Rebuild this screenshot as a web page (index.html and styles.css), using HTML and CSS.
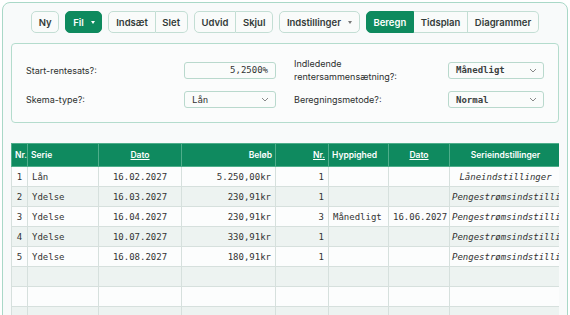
FILE: index.html
```html
<!doctype html>
<html lang="da">
	<head>
		<meta charset="UTF-8" />
		<title>Lånekalkulator</title>
		<link rel="stylesheet" href="styles.css">
	</head>
	<body>
		<div class="app">
			<div class="toolbar">
				<button class="btn">Ny</button>
				<button class="btn primary">Fil <span class="caret"></span></button>
				<div class="group">
					<button class="btn">Indsæt</button>
					<button class="btn">Slet</button>
				</div>
				<div class="group">
					<button class="btn">Udvid</button>
					<button class="btn">Skjul</button>
				</div>
				<button class="btn">Indstillinger <span class="caret"></span></button>
				<div class="group">
					<button class="btn primary">Beregn</button>
					<button class="btn">Tidsplan</button>
					<button class="btn">Diagrammer</button>
				</div>
			</div>

			<div class="settings">
				<div class="field">
					<label>Start-rentesats?:</label>
					<div class="input">5,2500%</div>
				</div>
				<div class="field">
					<label>Indledende<br>rentersammensætning?:</label>
					<div class="select wide"><span>Månedligt</span>
						<svg width="8" height="5" viewBox="0 0 8 5"><path d="M1 1l3 3 3-3" fill="none" stroke="#888" stroke-width="1"/></svg>
					</div>
				</div>
				<div class="field">
					<label>Skema-type?:</label>
					<div class="select"><span>Lån</span>
						<svg width="8" height="5" viewBox="0 0 8 5"><path d="M1 1l3 3 3-3" fill="none" stroke="#888" stroke-width="1"/></svg>
					</div>
				</div>
				<div class="field">
					<label>Beregningsmetode?:</label>
					<div class="select wide"><span>Normal</span>
						<svg width="8" height="5" viewBox="0 0 8 5"><path d="M1 1l3 3 3-3" fill="none" stroke="#888" stroke-width="1"/></svg>
					</div>
				</div>
			</div>

			<div class="table-wrap">
				<table class="grid">
					<colgroup>
						<col style="width:16px"><col style="width:71px"><col style="width:83px"><col style="width:94px">
						<col style="width:53px"><col style="width:60px"><col style="width:61px"><col style="width:112px">
					</colgroup>
					<thead>
						<tr>
							<th class="left">Nr.</th>
							<th class="left">Serie</th>
							<th class="center"><a>Dato</a></th>
							<th class="right">Beløb</th>
							<th class="right"><a>Nr.</a></th>
							<th class="left">Hyppighed</th>
							<th class="center"><a>Dato</a></th>
							<th class="center">Serieindstillinger</th>
						</tr>
					</thead>
					<tbody>
						<tr>
							<td class="center">1</td><td>Lån</td><td class="center">16.02.2027</td><td class="right">5.250,00kr</td>
							<td class="right">1</td><td></td><td></td><td class="center opt">Låneindstillinger</td>
						</tr>
						<tr>
							<td class="center">2</td><td>Ydelse</td><td class="center">16.03.2027</td><td class="right">230,91kr</td>
							<td class="right">1</td><td></td><td></td><td class="center opt">Pengestrømsindstillinger</td>
						</tr>
						<tr>
							<td class="center">3</td><td>Ydelse</td><td class="center">16.04.2027</td><td class="right">230,91kr</td>
							<td class="right">3</td><td>Månedligt</td><td class="center">16.06.2027</td><td class="center opt">Pengestrømsindstillinger</td>
						</tr>
						<tr>
							<td class="center">4</td><td>Ydelse</td><td class="center">10.07.2027</td><td class="right">330,91kr</td>
							<td class="right">1</td><td></td><td></td><td class="center opt">Pengestrømsindstillinger</td>
						</tr>
						<tr>
							<td class="center">5</td><td>Ydelse</td><td class="center">16.08.2027</td><td class="right">180,91kr</td>
							<td class="right">1</td><td></td><td></td><td class="center opt">Pengestrømsindstillinger</td>
						</tr>
						<tr><td></td><td></td><td></td><td></td><td></td><td></td><td></td><td></td></tr>
						<tr><td></td><td></td><td></td><td></td><td></td><td></td><td></td><td></td></tr>
						<tr><td></td><td></td><td></td><td></td><td></td><td></td><td></td><td></td></tr>
						<tr><td></td><td></td><td></td><td></td><td></td><td></td><td></td><td></td></tr>
					</tbody>
				</table>
			</div>
		</div>
	</body>
</html>
```

FILE: styles.css
```css
* {
	margin: 0;
	padding: 0;
	box-sizing: border-box;
}
body {
	background: #fff;
	font-family: Inter, "Noto Sans", sans-serif;
	color: #2b2f2e;
}
.app {
	margin: 2px;
	border: 1px solid #a9d8c7;
	border-radius: 8px;
	background: #f8fafa;
	padding: 8px;
	min-height: 400px;
}

/* værktøjslinje */
.toolbar {
	display: flex;
	justify-content: center;
	gap: 6px;
}
.group {
	display: flex;
}
.btn {
	height: 22px;
	padding: 0 6.75px;
	border: 1px solid #c3ded4;
	border-radius: 5px;
	background: #f9fbfa;
	font-family: Inter, sans-serif;
	font-size: 9.5px;
	font-weight: 600;
	color: #333a38;
	display: flex;
	align-items: center;
	gap: 5px;
}
.btn.primary {
	background: #0e8a5e;
	border-color: #0e8a5e;
	color: #fff;
}
.group .btn {
	border-radius: 0;
}
.group .btn + .btn {
	border-left: none;
}
.group .btn:first-child {
	border-radius: 5px 0 0 5px;
}
.group .btn:last-child {
	border-radius: 0 5px 5px 0;
}
.caret {
	width: 0;
	height: 0;
	border-left: 2.5px solid transparent;
	border-right: 2.5px solid transparent;
	border-top: 3px solid #777;
	margin-left: 2px;
}
.btn.primary .caret {
	border-top-color: #fff;
}

/* indstillinger */
.settings {
	margin-top: 10px;
	border: 1px solid #b4dccd;
	border-radius: 4px;
	background: #fbfcfc;
	padding: 13px 14px 14px;
	display: grid;
	grid-template-columns: 1fr 1fr;
	column-gap: 18px;
	row-gap: 8px;
}
.field {
	display: flex;
	align-items: center;
	min-height: 17px;
}
.field label {
	flex: 1;
	font-size: 9px;
	line-height: 13px;
	color: #2b2f2e;
}
.input, .select {
	width: 92px;
	height: 17px;
	border: 1px solid #b9d9cd;
	border-radius: 3px;
	background: #fafcfb;
	font-family: "DejaVu Sans Mono", monospace;
	font-size: 9px;
	color: #333;
	display: flex;
	align-items: center;
}
.input {
	justify-content: flex-end;
	padding: 0 7px;
}
.select {
	justify-content: space-between;
	padding: 0 6px 0 7px;
}
.select.wide {
	width: 96px;
	font-weight: bold;
	color: #3a3f3e;
}

/* tabel */
.table-wrap {
	margin-top: 20px;
	overflow: hidden;
}
.grid {
	border-collapse: collapse;
	table-layout: fixed;
	width: 550px;
}
.grid th {
	height: 23px;
	background: #0f8a5f;
	color: #fff;
	font-size: 8.5px;
	font-weight: 600;
	padding: 0 3px;
	border: 1px solid #4fae8b;
	white-space: nowrap;
}
.grid th a {
	text-decoration: underline;
}
.grid td {
	height: 20px;
	padding: 0 4px;
	border: 1px solid #d6e0dd;
	font-family: "DejaVu Sans Mono", monospace;
	font-size: 9px;
	color: #333;
	white-space: nowrap;
	overflow: hidden;
}
.grid tbody tr:nth-child(odd) td {
	background: #fcfdfd;
}
.grid tbody tr:nth-child(even) td {
	background: #edf3f1;
}
.left {
	text-align: left;
}
.center {
	text-align: center;
}
.right {
	text-align: right;
}
.grid td.opt {
	font-style: italic;
	padding: 0 2px;
}
```
